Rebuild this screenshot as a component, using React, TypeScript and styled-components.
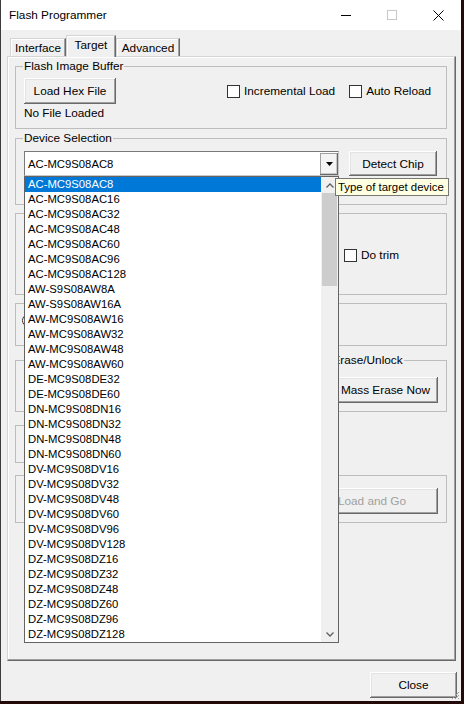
import React from 'react';
import styled, { createGlobalStyle } from 'styled-components';

const Global = createGlobalStyle`
  html, body { margin: 0; padding: 0; }
  body {
    width: 464px;
    height: 704px;
    overflow: hidden;
    background: #240909;
    font-family: "Liberation Sans", Arial, sans-serif;
  }
`;

const Win = styled.div`
  position: relative;
  width: 461px;
  height: 701px;
  box-sizing: border-box;
  background: #f0f0f0;
  border-left: 1px solid #3c3c3c;
  display: flex;
  flex-direction: column;
  font-size: 11.8px;
  color: #000;
`;

const TitleBar = styled.div`
  height: 30px;
  flex: none;
  background: #fff;
  display: flex;
  align-items: center;
`;

const Title = styled.div`
  flex: 1;
  padding-left: 8px;
  font-size: 11.8px;
  color: #000;
`;

const CaptionBtn = styled.div`
  width: 46px;
  height: 30px;
  display: flex;
  align-items: center;
  justify-content: center;
`;

const Body = styled.div`
  flex: 1;
  display: flex;
  flex-direction: column;
  padding: 0 4px 0 6px;
`;

const TabStrip = styled.div`
  height: 26px;
  display: flex;
  align-items: flex-end;
  padding-left: 3px;
`;

const Tab = styled.div<{ $w: number; $active?: boolean }>`
  position: relative;
  z-index: ${p => (p.$active ? 2 : 1)};
  width: ${p => p.$w}px;
  height: ${p => (p.$active ? 22 : 18)}px;
  margin-bottom: ${p => (p.$active ? -1 : 0)}px;
  box-sizing: border-box;
  background: #f0f0f0;
  border-top: 1px solid #d4d4d4;
  border-left: 1px solid #d4d4d4;
  border-right: 1px solid #696969;
  box-shadow: inset -1px 0 0 #a0a0a0, inset 1px 1px 0 #fff;
  display: flex;
  align-items: center;
  justify-content: center;
  padding-bottom: ${p => (p.$active ? 3 : 0)}px;
  line-height: 14px;
`;

const Panel = styled.div`
  width: 449px;
  height: 605px;
  box-sizing: border-box;
  border-top: 1px solid #d4d4d4;
  border-left: 1px solid #d4d4d4;
  border-right: 1px solid #696969;
  border-bottom: 1px solid #696969;
  box-shadow: inset -1px -1px 0 #a0a0a0, inset 1px 1px 0 #fff;
  padding: 0 8px 0 7px;
  display: flex;
  flex-direction: column;
`;

const Group = styled.fieldset<{ $h: number; $mt: number; $w?: number }>`
  margin: ${p => p.$mt}px 0 0 0;
  padding: 0;
  min-width: 0;
  width: ${p => (p.$w ? `${p.$w}px` : 'auto')};
  height: ${p => p.$h}px;
  box-sizing: border-box;
  border: 1px solid #bdbdbd;
  flex: none;
`;

const Legend = styled.legend<{ $blank?: boolean }>`
  margin-left: 7px;
  padding: 0 ${p => (p.$blank ? 0 : 1)}px;
  height: 14px;
  line-height: 14px;
  font-size: 11.8px;
`;

const GroupBody = styled.div<{ $pt: number; $pl?: number; $pr?: number; $end?: boolean }>`
  padding: ${p => p.$pt}px ${p => p.$pr ?? 0}px 0 ${p => p.$pl ?? 0}px;
  display: flex;
  align-items: flex-start;
  justify-content: ${p => (p.$end ? 'flex-end' : 'flex-start')};
`;

const GroupRow = styled.div`
  display: flex;
  gap: 7px;
  margin-top: 7px;
`;

const Btn = styled.button<{ $w: number; $h?: number; $ml?: number; $disabled?: boolean }>`
  width: ${p => p.$w}px;
  height: ${p => p.$h ?? 26}px;
  margin-left: ${p => p.$ml ?? 0}px;
  flex: none;
  box-sizing: border-box;
  padding: 0;
  border: none;
  background: #f0f0f0;
  box-shadow: inset -1px -1px 0 #696969, inset 1px 1px 0 #fff, inset -2px -2px 0 #a0a0a0,
    inset 2px 2px 0 #e3e3e3;
  font-family: "Liberation Sans", Arial, sans-serif;
  font-size: 11.8px;
  color: ${p => (p.$disabled ? '#a0a0a0' : '#000')};
`;

const Column = styled.div`
  display: flex;
  flex-direction: column;
`;

const Note = styled.div`
  margin-top: 2px;
  line-height: 14px;
`;

const Checks = styled.div`
  height: 26px;
  display: flex;
  align-items: center;
  gap: 14px;
  margin-left: 111px;
`;

const Check = styled.label<{ $ml?: number }>`
  display: flex;
  align-items: center;
  gap: 4px;
  line-height: 14px;
  margin-left: ${p => p.$ml ?? 0}px;
`;

const Box = styled.span`
  width: 13px;
  height: 13px;
  box-sizing: border-box;
  border: 1px solid #333;
  background: #fff;
  flex: none;
`;

const Radio = styled.span`
  width: 13px;
  height: 13px;
  box-sizing: border-box;
  border: 1px solid #333;
  border-radius: 50%;
  background: #fff;
  margin: 2px 0 0 6px;
`;

const ComboWrap = styled.div`
  position: relative;
  width: 315px;
  height: 25px;
  flex: none;
`;

const Combo = styled.div`
  width: 100%;
  height: 100%;
  box-sizing: border-box;
  background: #fff;
  border-top: 1px solid #7a7a7a;
  border-left: 1px solid #7a7a7a;
  border-right: 1px solid #c8c8c8;
  border-bottom: 1px solid #c8c8c8;
  display: flex;
  align-items: center;
  padding: 0 0 0 3px;
`;

const ComboText = styled.div`
  flex: 1;
  font-size: 11.3px;
`;

const DropBtn = styled.div`
  width: 18px;
  height: 22px;
  box-sizing: border-box;
  background: #f4f4f4;
  box-shadow: inset -1px -1px 0 #696969, inset 1px 1px 0 #a0a0a0, inset -2px -2px 0 #c8c8c8;
  display: flex;
  align-items: center;
  justify-content: center;
`;

const DropList = styled.div`
  position: absolute;
  left: 0;
  top: 25px;
  z-index: 10;
  width: 315px;
  height: 467px;
  box-sizing: border-box;
  border: 1px solid #646464;
  background: #fff;
  display: flex;
`;

const Items = styled.div`
  flex: 1;
  overflow: hidden;
`;

const Item = styled.div<{ $sel?: boolean }>`
  height: 15px;
  line-height: 15px;
  padding-left: 3px;
  white-space: nowrap;
  font-size: 11.3px;
  background: ${p => (p.$sel ? '#0078d7' : 'transparent')};
  color: ${p => (p.$sel ? '#fff' : '#000')};
`;

const ScrollBar = styled.div`
  width: 17px;
  background: #f0f0f0;
  display: flex;
  flex-direction: column;
`;

const ScrollArrow = styled.div`
  height: 16px;
  display: flex;
  align-items: center;
  justify-content: center;
  flex: none;
`;

const Thumb = styled.div`
  height: 93px;
  margin: 0 1px;
  background: #cdcdcd;
  flex: none;
`;

const Track = styled.div`
  flex: 1;
`;

const Tooltip = styled.div`
  position: absolute;
  left: 311px;
  top: 27px;
  z-index: 20;
  width: 114px;
  height: 18px;
  box-sizing: border-box;
  border: 1px solid #767676;
  background: #ffffe1;
  padding-left: 2px;
  font-size: 11.4px;
  line-height: 16px;
  white-space: nowrap;
`;

const Footer = styled.div`
  display: flex;
  justify-content: flex-end;
  margin-top: 11px;
`;

const Grip = styled.svg`
  position: absolute;
  right: 1px;
  bottom: 1px;
`;

const devices = [
  'AC-MC9S08AC8', 'AC-MC9S08AC16', 'AC-MC9S08AC32', 'AC-MC9S08AC48', 'AC-MC9S08AC60',
  'AC-MC9S08AC96', 'AC-MC9S08AC128', 'AW-S9S08AW8A', 'AW-S9S08AW16A', 'AW-MC9S08AW16',
  'AW-MC9S08AW32', 'AW-MC9S08AW48', 'AW-MC9S08AW60', 'DE-MC9S08DE32', 'DE-MC9S08DE60',
  'DN-MC9S08DN16', 'DN-MC9S08DN32', 'DN-MC9S08DN48', 'DN-MC9S08DN60', 'DV-MC9S08DV16',
  'DV-MC9S08DV32', 'DV-MC9S08DV48', 'DV-MC9S08DV60', 'DV-MC9S08DV96', 'DV-MC9S08DV128',
  'DZ-MC9S08DZ16', 'DZ-MC9S08DZ32', 'DZ-MC9S08DZ48', 'DZ-MC9S08DZ60', 'DZ-MC9S08DZ96',
  'DZ-MC9S08DZ128',
];

export default function App() {
  return (
    <>
      <Global />
      <Win>
        <TitleBar>
          <Title>Flash Programmer</Title>
          <CaptionBtn>
            <svg width="10" height="10" viewBox="0 0 10 10">
              <line x1="0" y1="5.5" x2="10" y2="5.5" stroke="#000" strokeWidth="1" />
            </svg>
          </CaptionBtn>
          <CaptionBtn>
            <svg width="10" height="10" viewBox="0 0 10 10">
              <rect x="0.5" y="0.5" width="9" height="9" fill="none" stroke="#c8c8c8" strokeWidth="1" />
            </svg>
          </CaptionBtn>
          <CaptionBtn>
            <svg width="11" height="11" viewBox="0 0 11 11">
              <path d="M0.5 0.5L10.5 10.5M10.5 0.5L0.5 10.5" stroke="#000" strokeWidth="1" />
            </svg>
          </CaptionBtn>
        </TitleBar>
        <Body>
          <TabStrip>
            <Tab $w={56}>Interface</Tab>
            <Tab $w={50} $active>Target</Tab>
            <Tab $w={64}>Advanced</Tab>
          </TabStrip>
          <Panel>
            <Group $mt={2} $h={70}>
              <Legend>Flash Image Buffer</Legend>
              <GroupBody $pt={5} $pl={8}>
                <Column>
                  <Btn $w={92}>Load Hex File</Btn>
                  <Note>No File Loaded</Note>
                </Column>
                <Checks>
                  <Check><Box />Incremental Load</Check>
                  <Check><Box />Auto Reload</Check>
                </Checks>
              </GroupBody>
            </Group>
            <Group $mt={2} $h={74}>
              <Legend>Device Selection</Legend>
              <GroupBody $pt={6} $pl={8}>
                <ComboWrap>
                  <Combo>
                    <ComboText>AC-MC9S08AC8</ComboText>
                    <DropBtn>
                      <svg width="7" height="4" viewBox="0 0 7 4">
                        <polygon points="0,0 7,0 3.5,4" fill="#000" />
                      </svg>
                    </DropBtn>
                  </Combo>
                  <DropList>
                    <Items>
                      {devices.map((d, i) => (
                        <Item key={d} $sel={i === 0}>{d}</Item>
                      ))}
                    </Items>
                    <ScrollBar>
                      <ScrollArrow>
                        <svg width="8" height="5" viewBox="0 0 8 5">
                          <polyline points="0.5,4.5 4,1 7.5,4.5" fill="none" stroke="#606060" strokeWidth="1.3" />
                        </svg>
                      </ScrollArrow>
                      <Thumb />
                      <Track />
                      <ScrollArrow>
                        <svg width="8" height="5" viewBox="0 0 8 5">
                          <polyline points="0.5,0.5 4,4 7.5,0.5" fill="none" stroke="#606060" strokeWidth="1.3" />
                        </svg>
                      </ScrollArrow>
                    </ScrollBar>
                  </DropList>
                  <Tooltip>Type of target device</Tooltip>
                </ComboWrap>
                <Btn $w={88} $h={25} $ml={10}>Detect Chip</Btn>
              </GroupBody>
            </Group>
            <Group $mt={1} $h={89}>
              <Legend $blank />
              <GroupBody $pt={28}>
                <Check $ml={328}><Box />Do trim</Check>
              </GroupBody>
            </Group>
            <Group $mt={1} $h={50}>
              <Legend $blank />
              <GroupBody $pt={2}>
                <Radio />
              </GroupBody>
            </Group>
            <GroupRow>
              <Group $mt={0} $h={59} $w={270}>
                <Legend $blank />
              </Group>
              <Group $mt={0} $h={59} $w={155}>
                <Legend>Mass Erase/Unlock</Legend>
                <GroupBody $pt={10} $pr={8} $end>
                  <Btn $w={105}>Mass Erase Now</Btn>
                </GroupBody>
              </Group>
            </GroupRow>
            <Group $mt={6} $h={45} $w={270}>
              <Legend $blank />
            </Group>
            <Group $mt={5} $h={55}>
              <Legend $blank />
              <GroupBody $pt={6} $pr={8} $end>
                <Btn $w={132} $disabled>Load and Go</Btn>
              </GroupBody>
            </Group>
          </Panel>
          <Footer>
            <Btn $w={87}>Close</Btn>
          </Footer>
        </Body>
        <Grip width="10" height="10" viewBox="0 0 10 10">
          <path d="M9 2L2 9M9 5L5 9M9 8L8 9" stroke="#a0a0a0" strokeWidth="1" />
        </Grip>
      </Win>
    </>
  );
}
